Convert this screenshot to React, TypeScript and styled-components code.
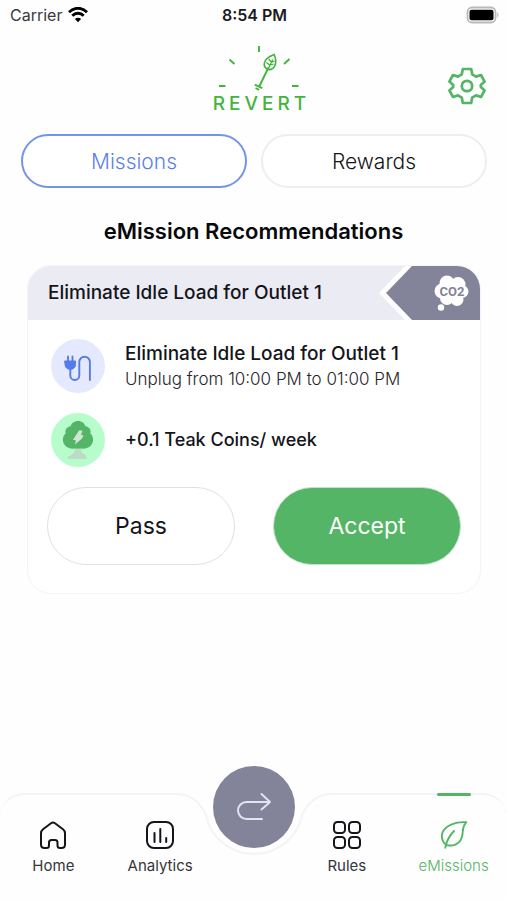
import React from "react";
import styled, { createGlobalStyle } from "styled-components";

const green = "#53b565";
const slate = "#838399";
const ink = "#141519";

const GlobalStyle = createGlobalStyle`
  * { box-sizing: border-box; }
  body { margin: 0; background: #fefefe; color: ${ink}; font-family: Inter, "Liberation Sans", sans-serif; }
  button { font: inherit; color: inherit; background: none; border: 0; padding: 0; cursor: pointer; }
  h1, h2, h3, p { margin: 0; }
  svg { display: block; }
`;

const Screen = styled.div`
  display: flex;
  flex-direction: column;
  min-height: 100vh;
`;

const StatusBar = styled.div`
  display: grid;
  grid-template-columns: 1fr auto 1fr;
  align-items: center;
  height: 30px;
  padding: 0 8px 0 10px;
  font-size: 16px;
  color: #3a3a3c;
`;

const Carrier = styled.div`
  display: flex;
  align-items: center;
  gap: 6px;
`;

const Clock = styled.time`
  font-size: 16px;
  font-weight: 600;
  color: #1c1c1e;
`;

const Battery = styled.svg`
  justify-self: end;
`;

const Header = styled.header`
  display: grid;
  grid-template-columns: 1fr auto 1fr;
  align-items: center;
  height: 104px;
  padding: 0 21px;
`;

const Brand = styled.div`
  grid-column: 2;
  display: flex;
  flex-direction: column;
  align-items: center;
  padding: 0 0 6px 12px;
`;

const Wordmark = styled.span`
  font-size: 19px;
  line-height: 20px;
  font-weight: 500;
  letter-spacing: 4px;
  padding: 2px 0 0 4px;
  color: #43b53c;
`;

const SettingsButton = styled.button`
  justify-self: end;
  padding-top: 8px;
`;

const Tabs = styled.div`
  display: flex;
  gap: 14px;
  padding: 0 20px 0 21px;
`;

const Tab = styled.button<{ $active?: boolean }>`
  flex: 1;
  height: 54px;
  border: ${(p) => (p.$active ? "2px solid #7494ea" : "2px solid #eeeef0")};
  border-radius: 27px;
  background: #fff;
  font-size: 21px;
  font-weight: 300;
  color: ${(p) => (p.$active ? "#5b80ea" : ink)};
`;

const Main = styled.main`
  flex: 1;
  padding-bottom: 24px;
`;

const Heading = styled.h1`
  padding: 28px 20px 19px;
  font-size: 22px;
  line-height: 30px;
  font-weight: 600;
  text-align: center;
  color: #08090b;
`;

const Card = styled.section`
  margin: 0 26px 0 27px;
  border: 1px solid #f4f4f6;
  border-radius: 24px;
  overflow: hidden;
  background: #fff;
`;

const CardHeader = styled.div`
  display: flex;
  align-items: center;
  justify-content: space-between;
  height: 54px;
  padding-left: 20px;
  background: #ebebf4;
`;

const CardTitle = styled.h2`
  font-size: 19px;
  line-height: 24px;
  font-weight: 500;
`;

const Details = styled.div`
  display: flex;
  flex-direction: column;
  gap: 20px;
  padding: 19px 20px 20px 23px;
`;

const Detail = styled.div`
  display: flex;
  align-items: center;
  gap: 20px;
  min-height: 54px;
`;

const IconDisc = styled.span<{ $tone: string }>`
  flex: none;
  width: 54px;
  height: 54px;
  border-radius: 50%;
  background: ${(p) => p.$tone};
`;

const DetailTitle = styled.h3`
  font-size: 19px;
  line-height: 26px;
  font-weight: 500;
`;

const RewardText = styled.p`
  font-size: 18px;
  line-height: 24px;
  font-weight: 500;
`;

const DetailText = styled.p`
  font-size: 17px;
  line-height: 24px;
  font-weight: 300;
  color: #26272b;
`;

const Actions = styled.div`
  display: flex;
  gap: 38px;
  padding: 0 19px 28px;
`;

const Action = styled.button<{ $primary?: boolean }>`
  flex: 1;
  height: 78px;
  border-radius: 39px;
  border: 1px solid ${(p) => (p.$primary ? "#c3e3ca" : "#dfdfe2")};
  background: ${(p) => (p.$primary ? green : "#fff")};
  color: ${(p) => (p.$primary ? "#fff" : ink)};
  font-size: 23px;
`;

const Nav = styled.nav`
  display: grid;
  height: 134px;
`;

const NavOutline = styled.div`
  grid-area: 1 / 1;
  display: flex;
  padding-top: 27px;
`;

const Shoulder = styled.div<{ $side: "left" | "right" }>`
  flex: 1;
  height: 24px;
  border-top: 2px solid #f4f4f5;
  border-top-${(p) => p.$side}-radius: 24px;
`;

const NavItems = styled.div`
  grid-area: 1 / 1;
  display: grid;
  grid-template-columns: repeat(2, 1fr) 80px repeat(2, 1fr);
  align-items: start;
`;

const NavItem = styled.button<{ $active?: boolean }>`
  display: flex;
  flex-direction: column;
  align-items: center;
  gap: 7px;
  padding-top: 27px;
  font-size: 15px;
  line-height: 20px;
  font-weight: ${(p) => (p.$active ? 300 : 400)};
  color: ${(p) => (p.$active ? green : "#35363a")};

  &::before {
    content: "";
    width: 34px;
    height: 3px;
    margin-bottom: 18px;
    border-radius: 2px;
    background: ${(p) => (p.$active ? green : "transparent")};
  }
`;

const RoundButton = styled.button`
  display: grid;
  place-items: center;
  width: 82px;
  height: 82px;
  border-radius: 50%;
  background: ${slate};
  justify-self: center;
`;

const WifiIcon = () => (
  <svg width="20" height="16" viewBox="0 0 20 16" fill="none" stroke="#000" strokeWidth="2.8" aria-hidden="true">
    <path d="M1 5.2C6-.1 14-.1 19 5.2" />
    <path d="M4.3 8.7c3.2-3.3 8.2-3.3 11.4 0" />
    <path d="M10 15.3 6.9 12a4.4 4.4 0 0 1 6.2 0Z" fill="#000" stroke="none" />
  </svg>
);

const BatteryIcon = () => (
  <Battery width="33" height="18" viewBox="0 0 33 18" aria-label="Battery full">
    <rect x="1.5" y="1.5" width="28" height="15" rx="4.5" fill="#fff" stroke="#b9b9ba" strokeWidth="1.8" />
    <rect x="3.5" y="3.7" width="24" height="10.6" rx="2" fill="#000" />
    <path d="M31.2 6.5c1.7.8 1.7 4.2 0 5Z" fill="#b9b9ba" />
  </Battery>
);

const LogoMark = () => (
  <svg width="96" height="48" viewBox="0 0 96 48" fill="none" stroke="#43b53c" strokeWidth="1.9" aria-hidden="true">
    <path d="M48 2v6M18.5 15.5l5 4.5M73 20l5.5-5M8 42h6.5M81 42h6.5" />
    <path d="M57.5 23.5 48 43M43.800 40.600l7.400 3.600M44.500 44l3.600 1.800" />
    <path d="M57.200 25.500c-5.800-2.500-6.400-10.200 6-15 3.800 9.500-.3 16-6 15Z" strokeWidth="1.6" />
    <path d="m57.500 24.500 4.200-9M55.300 18.500l3.400 2.600 3.800-1M57.800 15l2.400 3.200 3.300-1" strokeWidth="1.3" />
  </svg>
);

const GearIcon = () => (
  <svg width="38" height="38" viewBox="0 0 38 38" fill="none" stroke={green} strokeWidth="2.7" strokeLinejoin="round" aria-hidden="true">
    <path d="M14.800 2h8.400L24.200 7.300 28 9.600 33 8 36.600 14.600 32.800 18v2L36.600 23.400 33 30 28 28.400 24.200 30.700 23.200 36H14.800L13.800 30.700 10 28.400 5 30 1.400 23.400 5.200 20V18L1.400 14.600 5 8 10 9.600 13.800 7.300Z" />
    <circle cx="19" cy="19" r="5.2" />
  </svg>
);

const CarbonBadge = () => (
  <svg width="101" height="54" viewBox="0 0 101 54" role="img" aria-label="CO2">
    <path d="M26 0 0 27l26 27h75V0Z" fill="#fff" />
    <path d="M33 0 7 27l26 27h68V0Z" fill={slate} />
    <g fill="#fff">
      <circle cx="63" cy="25" r="7.5" />
      <circle cx="68" cy="17" r="7.5" />
      <circle cx="79" cy="18.5" r="7.5" />
      <circle cx="83" cy="25.5" r="6.5" />
      <circle cx="78" cy="33.5" r="6.5" />
      <circle cx="68" cy="32" r="7" />
      <circle cx="73" cy="25" r="12" />
      <circle cx="62" cy="41.500" r="3.2" />
    </g>
    <text x="73" y="30" textAnchor="middle" fontFamily="'Liberation Sans Narrow', Roboto, sans-serif" fontWeight="700" fontSize="13" fill={slate}>
      CO2
    </text>
  </svg>
);

const PlugIcon = () => (
  <svg width="54" height="54" viewBox="0 0 54 54" fill="none" stroke="#547be8" strokeWidth="1.9" strokeLinecap="round" aria-hidden="true">
    <path d="M17 17.500v5M21.500 17.500v5" />
    <path d="M14 22h10.500v3.500c0 3-2 4.800-5.200 4.800S14 28.500 14 25.500Z" fill="#547be8" strokeWidth="1" />
    <path d="M19.300 30v6.500a4.500 4.500 0 0 0 9 0V23a5.300 5.300 0 0 1 10.600 0v18" />
  </svg>
);

const TreeIcon = () => (
  <svg width="54" height="54" viewBox="0 0 54 54" aria-hidden="true">
    <path d="M23.500 34h7v5l5 4v3H17v-3h2l4.500-4Z" fill="#bcdcc6" />
    <path
      d="M27 8c4 0 6.500 2.300 7.400 5.200 4 .5 6 4 4.900 7.300 3.200 2.500 3.800 8 1 11.500-2.500 3.200-6.500 4-10.300 3.500h-6c-3.800.5-7.800-.3-10.300-3.500-2.800-3.500-2.200-9 1-11.500-1.100-3.300.9-6.800 4.900-7.300C20.500 10.300 23 8 27 8Z"
      fill={green}
    />
    <path d="m28 17.500-6 9.300 3 .8-1.200 4.200 7.200-6.300 1.500-3-2.500-.5 1.500-4.500Z" fill="#cfe6d5" />
  </svg>
);

const HomeIcon = () => (
  <svg width="28" height="28" viewBox="0 0 28 28" fill="none" stroke={ink} strokeWidth="2" strokeLinejoin="round" aria-hidden="true">
    <path d="M2 12.200Q2 9.700 4 8.200L12 2.200Q14 .8 16 2.200L24 8.200Q26 9.700 26 12.200V23.500Q26 27 22.500 27H21Q18.500 27 18.500 24.500V21.500Q18.500 19 16 19H12.500Q10 19 10 21.500V24.500Q10 27 7.500 27H5.500Q2 27 2 23.500Z" />
  </svg>
);

const ChartIcon = () => (
  <svg width="28" height="28" viewBox="0 0 28 28" fill="none" stroke={ink} strokeWidth="2" strokeLinecap="round" aria-hidden="true">
    <rect x="1" y="1" width="26" height="26" rx="7" />
    <path d="M8.500 12v9M14.300 8v13M20.200 17v4" />
  </svg>
);

const GridIcon = () => (
  <svg width="28" height="28" viewBox="0 0 28 28" fill="none" stroke={ink} strokeWidth="2" aria-hidden="true">
    <rect x="1" y="1" width="11" height="11" rx="3.5" />
    <rect x="16" y="1" width="11" height="11" rx="3.5" />
    <rect x="1" y="16" width="11" height="11" rx="3.5" />
    <rect x="16" y="16" width="11" height="11" rx="3.5" />
  </svg>
);

const LeafIcon = () => (
  <svg width="28" height="28" viewBox="0 0 28 28" fill="none" stroke={green} strokeWidth="1.9" strokeLinecap="round" strokeLinejoin="round" aria-hidden="true">
    <path d="M26.300 1.200C16 .5 5.500 4 2.500 11.500.5 17 3.500 24.500 9.500 24.500c8 .5 13-5 13.200-13.500.1-4 1.300-7 3.600-9.800Z" />
    <path d="M5.300 26.700C6.500 20 9 15 14 10" />
  </svg>
);

const ReturnIcon = () => (
  <svg width="36" height="30" viewBox="0 0 36 30" fill="none" stroke="#e4e4f3" strokeWidth="1.9" strokeLinecap="round" strokeLinejoin="round" aria-hidden="true">
    <path d="M34 10H10.500a8.500 8.500 0 0 0 0 17H26M25.500 2l8.500 8-8.500 7.500" />
  </svg>
);

const Notch = () => (
  <svg width="172" height="64" viewBox="0 0 172 64" fill="none" stroke="#f4f4f5" strokeWidth="2" aria-hidden="true">
    <path d="M0 1h8C24 1 33 11 38 22 42 43 61 61 86 61s44-18 48-39C139 11 148 1 164 1h8" />
  </svg>
);

export default function App() {
  return (
    <>
      <GlobalStyle />
      <Screen>
        <StatusBar>
          <Carrier>
            <span>Carrier</span>
            <WifiIcon />
          </Carrier>
          <Clock>8:54 PM</Clock>
          <BatteryIcon />
        </StatusBar>
        <Header>
          <Brand>
            <LogoMark />
            <Wordmark>REVERT</Wordmark>
          </Brand>
          <SettingsButton aria-label="Settings">
            <GearIcon />
          </SettingsButton>
        </Header>
        <Main>
          <Tabs role="tablist">
            <Tab role="tab" aria-selected="true" $active>Missions</Tab>
            <Tab role="tab" aria-selected="false">Rewards</Tab>
          </Tabs>
          <Heading>eMission Recommendations</Heading>
          <Card>
            <CardHeader>
              <CardTitle>Eliminate Idle Load for Outlet 1</CardTitle>
              <CarbonBadge />
            </CardHeader>
            <Details>
              <Detail>
                <IconDisc $tone="#e5e9fd"><PlugIcon /></IconDisc>
                <div>
                  <DetailTitle>Eliminate Idle Load for Outlet 1</DetailTitle>
                  <DetailText>Unplug from 10:00 PM to 01:00 PM</DetailText>
                </div>
              </Detail>
              <Detail>
                <IconDisc $tone="#b7fdcb"><TreeIcon /></IconDisc>
                <RewardText>+0.1 Teak Coins/ week</RewardText>
              </Detail>
            </Details>
            <Actions>
              <Action>Pass</Action>
              <Action $primary>Accept</Action>
            </Actions>
          </Card>
        </Main>
        <Nav>
          <NavOutline>
            <Shoulder $side="left" />
            <Notch />
            <Shoulder $side="right" />
          </NavOutline>
          <NavItems>
            <NavItem><HomeIcon />Home</NavItem>
            <NavItem><ChartIcon />Analytics</NavItem>
            <RoundButton aria-label="Return"><ReturnIcon /></RoundButton>
            <NavItem><GridIcon />Rules</NavItem>
            <NavItem $active aria-current="page"><LeafIcon />eMissions</NavItem>
          </NavItems>
        </Nav>
      </Screen>
    </>
  );
}
